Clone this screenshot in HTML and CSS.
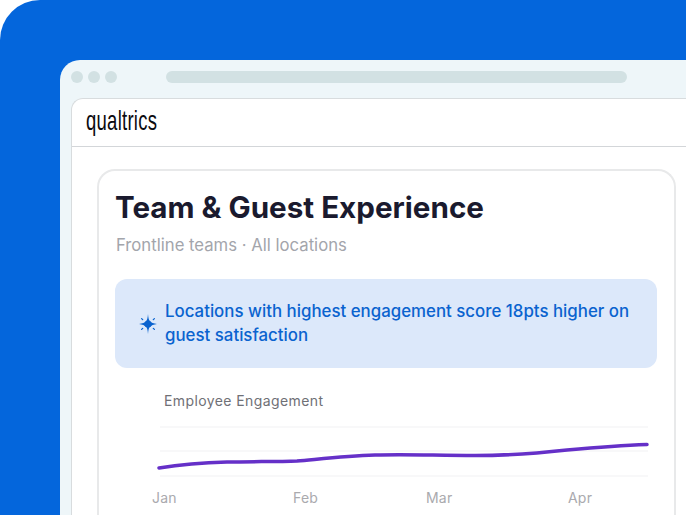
FILE: index.html
```html
<!DOCTYPE html>
<html lang="en">
<head>
<meta charset="utf-8">
<title>Team &amp; Guest Experience</title>
<link rel="stylesheet" href="styles.css">
</head>
<body>
<main class="stage">
  <div class="browser">
    <div class="toolbar">
      <div class="dots"><span class="dot"></span><span class="dot"></span><span class="dot"></span></div>
      <div class="address"></div>
    </div>
    <div class="window">
      <header class="app-header"><span class="logo">qualtrics</span></header>
      <div class="content">
        <section class="card">
          <h1 class="title">Team &amp; Guest Experience</h1>
          <p class="subtitle">Frontline teams · All locations</p>
          <div class="insight">
            <svg class="spark" width="20" height="20" viewBox="0 0 20 20" aria-hidden="true">
              <path class="spark-main" d="M10 0C10.300 3.500 10.800 5.800 11.800 7.200C13 8.500 15.800 9.500 19 10C15.800 10.500 13 11.500 11.800 12.800C10.800 14.200 10.300 16.500 10 20C9.700 16.500 9.200 14.200 8.200 12.800C7 11.500 4.200 10.500 1 10C4.200 9.500 7 8.500 8.200 7.200C9.200 5.800 9.700 3.500 10 0Z"/>
              <circle class="spark-main" cx="10" cy="10" r="3.600"/>
              <path class="spark-rays" d="M3.600 4.600L5.200 6.100M16.400 4.600L14.800 6.100M3.600 15.400L5.200 13.900M16.400 15.400L14.800 13.900"/>
            </svg>
            <p class="insight-text">Locations with highest engagement score 18pts higher on guest satisfaction</p>
          </div>
          <h2 class="chart-title">Employee Engagement</h2>
          <svg class="chart" width="496" height="62" viewBox="0 0 496 62" aria-hidden="true">
            <path class="grid" d="M5 1H493M5 25H493M5 50H493"/>
            <path class="trend" d="M4 42C28 38 50 36.500 72 36C100 35.300 122 36 142 35C165 33 190 30 220 29C255 28 280 29.500 320 29.500C350 29.500 385 27 412 24C440 21.500 465 19.500 492 18.500"/>
          </svg>
          <div class="months"><span>Jan</span><span>Feb</span><span>Mar</span><span>Apr</span></div>
        </section>
      </div>
    </div>
  </div>
</main>
</body>
</html>
```
FILE: styles.css
```css
* { box-sizing: border-box; }
html, body {
  margin: 0;
  height: 100%;
  overflow: hidden;
  background: #fff;
}
body { font-family: Inter, "Noto Sans", sans-serif; }
.stage {
  width: 686px;
  height: 515px;
  padding: 60px 0 0 60px;
  background: #0466dc;
  border-top-left-radius: 40px;
  overflow: hidden;
}
.browser {
  width: 626px;
  height: 480px;
  padding: 0 0 0 11px;
  background: #eef6f9;
  border-top-left-radius: 20px;
}
.toolbar {
  display: flex;
  align-items: center;
  height: 38px;
  padding: 0 0 4px 0;
}
.dots { display: flex; gap: 5px; }
.dot {
  width: 12px;
  height: 12px;
  border-radius: 50%;
  background: #d2e1e3;
}
.address {
  width: 461px;
  height: 12px;
  margin-left: 49px;
  border-radius: 6px;
  background: #d2e1e3;
}
.window {
  height: 440px;
  background: #fff;
  border-top: 1px solid #d8dcde;
  border-left: 1px solid #d8dcde;
  border-top-left-radius: 12px;
}
.app-header {
  display: flex;
  align-items: center;
  height: 48px;
  padding: 0 0 4px 14px;
  border-bottom: 1px solid #d3d6d9;
}
.logo {
  font-family: "Liberation Sans", sans-serif;
  font-size: 28px;
  line-height: 1;
  letter-spacing: 0.400px;
  color: #0b0b10;
  transform: scaleX(0.66);
  transform-origin: left center;
}
.content { padding: 22px 10px 0 25px; }
.card {
  height: 400px;
  padding: 18px 18px 0 17px;
  border: 2px solid #e8e9ea;
  border-bottom: 0;
  border-radius: 18px 18px 0 0;
}
.title {
  margin: 0 0 0 -1px;
  font-size: 29.600px;
  line-height: 36px;
  font-weight: 700;
  color: #1a1a2e;
}
.subtitle {
  margin: 10px 0 0;
  font-size: 16.700px;
  line-height: 20px;
  color: #a3a5ab;
}
.insight {
  display: flex;
  align-items: center;
  gap: 7px;
  height: 89px;
  margin: 24px 0 0 -1px;
  width: 542px;
  padding: 0 20px 0 23px;
  border-radius: 12px;
  background: #dce8fa;
}
.spark { flex: none; margin-top: 0; }
.spark-main { fill: #0a63cf; }
.spark-rays { fill: none; stroke: #0a63cf; stroke-width: 1.300; stroke-linecap: round; stroke-dasharray: 1.500 1; }
.insight-text {
  margin: -2px 0 0;
  font-size: 16.850px;
  line-height: 24px;
  font-weight: 500;
  color: #0a63cf;
}
.chart-title {
  margin: 24px 0 0 48px;
  font-size: 14px;
  line-height: 18px;
  font-weight: 400;
  letter-spacing: 0.400px;
  color: #6f7076;
}
.chart { display: block; margin: 16px 0 0 39px; }
.grid { fill: none; stroke: #f1f1f3; stroke-width: 1; }
.trend { fill: none; stroke: #6530c8; stroke-width: 3.500; stroke-linecap: round; }
.months {
  display: grid;
  grid-template-columns: 141px 133px 142px auto;
  margin: 0 0 0 36px;
  padding-top: 1px;
  font-size: 14px;
  line-height: 18px;
  letter-spacing: 0.200px;
  color: #aaaaae;
}
```
